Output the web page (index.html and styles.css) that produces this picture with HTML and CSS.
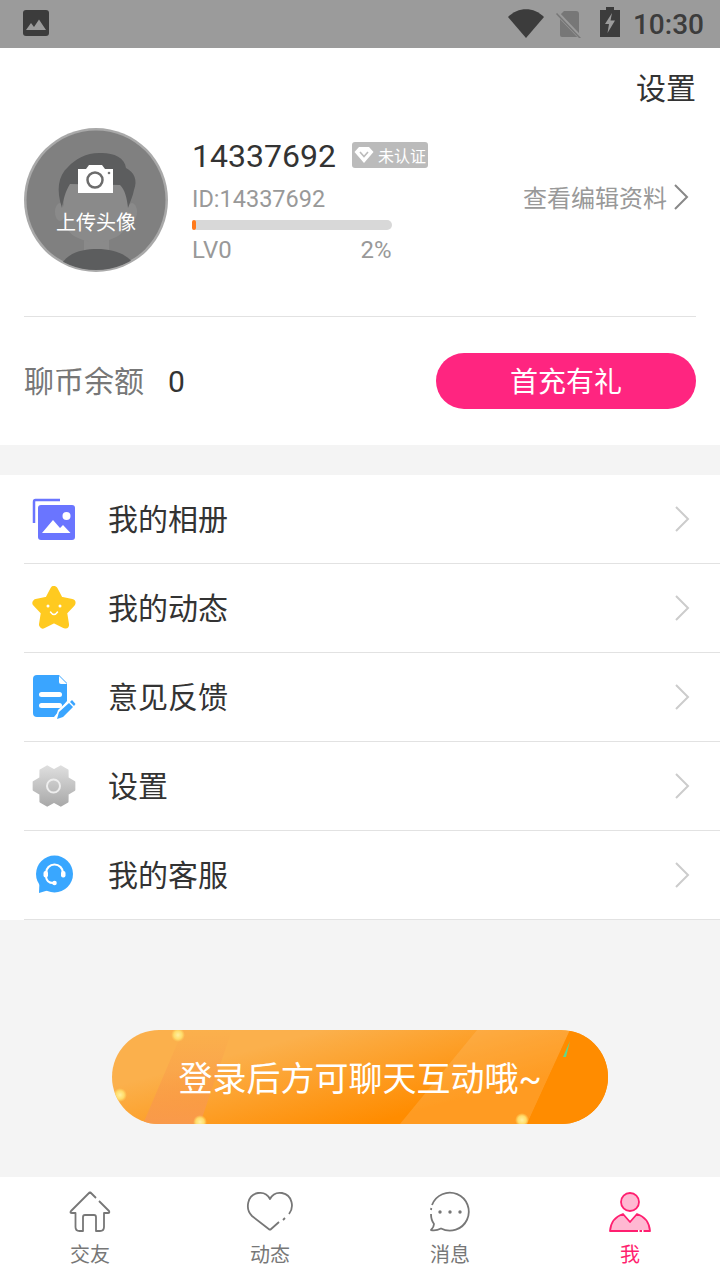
FILE: index.html
```html
<!DOCTYPE html>
<html lang="zh-CN">
<head>
  <meta charset="UTF-8">
  <meta name="viewport" content="width=device-width, initial-scale=1.0">
  <title>我的</title>
  <link rel="stylesheet" href="styles.css">
</head>
<body>
  <div class="page">
    <div class="status-bar">
      <svg class="status-image" width="26" height="26" viewBox="0 0 26 26">
        <rect width="26" height="26" rx="3" fill="#3c3c3c"/>
        <path d="M3 20 L8 13 L11 17 L16 9.500 L23 20 Z" fill="#9b9b9b"/>
      </svg>
      <div class="status-right">
        <svg width="36" height="30" viewBox="0 0 36 30"><path d="M0 8 C10 -2.500 26 -2.500 36 8 L18 29 Z" fill="#3c3c3c"/></svg>
        <svg class="status-sim" width="28" height="28" viewBox="0 0 28 28">
          <path d="M10 1 H22 Q25 1 25 4 V25 Q25 27 23 27 H8 Q6 27 6 25 V5 Z" fill="#777"/>
          <path d="M3 3 L27 28" stroke="#9b9b9b" stroke-width="4"/>
          <path d="M2.500 3.500 L26.500 28.500" stroke="#777" stroke-width="1.500"/>
        </svg>
        <svg class="status-battery" width="20" height="30" viewBox="0 0 20 30">
          <path d="M6 0 H14 V3 H20 V30 H0 V3 H6 Z" fill="#3c3c3c"/>
          <path d="M12 6 L5 17 H9 L7.500 26 L15 13.500 H10.500 Z" fill="#9b9b9b"/>
        </svg>
        <span class="status-time">10:30</span>
      </div>
    </div>

    <div class="profile">
      <div class="settings-link">设置</div>
      <div class="user-row">
        <div class="avatar">
          <svg width="144" height="144" viewBox="0 0 144 144">
            <defs><clipPath id="avatarClip"><circle cx="72" cy="72" r="70"/></clipPath></defs>
            <circle cx="72" cy="72" r="72" fill="#a9a9a9"/>
            <circle cx="72" cy="72" r="69.500" fill="#808080"/>
            <g clip-path="url(#avatarClip)">
              <ellipse cx="36" cy="84" rx="5" ry="9" fill="#8a8a8a"/>
              <ellipse cx="108" cy="84" rx="5" ry="9" fill="#8a8a8a"/>
              <rect x="60" y="100" width="25" height="30" fill="#8a8a8a"/>
              <path d="M40 56 H104 V88 Q104 112 72 114 Q40 112 40 88 Z" fill="#8a8a8a"/>
              <path d="M38 80 C32 62 34 48 44 39 C52 30 64 24 78 25 C90 25 101 30 102 40 C110 44 114 52 110 62 C109 68 106 74 104 80 C103 70 101 62 96 57 L46 56 C42 62 39 72 38 80 Z" fill="#5c5d5e"/>
              <path d="M37 137 C44 124 60 121 73 121 C88 121 101 125 108 134 V146 H37 Z" fill="#5c5d5e"/>
            </g>
            <path d="M54 41 H62 L65 37 H78 L81 41 H89 V65 H54 Z" fill="#fff"/>
            <circle cx="71" cy="52" r="7.500" fill="#fff" stroke="#6c6c6c" stroke-width="2.500"/>
            <circle cx="85" cy="45" r="1.300" fill="#777"/>
          </svg>
          <span class="avatar-text">上传头像</span>
        </div>
        <div class="user-info">
          <div class="name-row">
            <span class="user-name">14337692</span>
            <span class="badge">
              <svg width="20" height="18" viewBox="0 0 20 18">
                <path d="M5 1 H15 L19.500 6 L10 17 L0.500 6 Z" fill="#fff"/>
                <path d="M6 6 L10 10.500 L14 6" fill="none" stroke="#bbb" stroke-width="1.600"/>
              </svg>
              未认证
            </span>
          </div>
          <div class="id-row">
            <span class="user-id">ID:14337692</span>
            <span class="edit-link">查看编辑资料
              <svg width="16" height="28" viewBox="0 0 16 28"><path d="M2 2 L14 14 L2 26" fill="none" stroke="#888" stroke-width="2"/></svg>
            </span>
          </div>
          <div class="level-bar"><div class="level-fill" style="width: 2%"></div></div>
          <div class="level-row"><span>LV0</span><span>2%</span></div>
        </div>
      </div>
      <div class="balance-row">
        <span class="balance-label">聊币余额</span>
        <span class="balance-value">0</span>
        <button class="recharge-btn">首充有礼</button>
      </div>
    </div>

    <div class="menu">
      <div class="menu-row">
        <svg class="menu-icon" width="44" height="44" viewBox="0 0 44 44">
          <path d="M28 3 H3.500 Q2 3 2 5 V26" fill="none" stroke="#6a75ff" stroke-width="2.500"/>
          <rect x="6" y="8" width="37" height="35" rx="3" fill="#6a75ff"/>
          <circle cx="34.500" cy="19" r="4" fill="#fff"/>
          <path d="M10 36 L21 23 L28 31 L31 28 L38.500 36 Z" fill="#fff"/>
        </svg>
        <span class="menu-label">我的相册</span>
        <svg class="menu-arrow" width="16" height="28" viewBox="0 0 16 28"><path d="M2 2 L14 14 L2 26" fill="none" stroke="#ccc" stroke-width="2"/></svg>
      </div>
      <div class="menu-row">
        <svg class="menu-icon" width="44" height="44" viewBox="0 0 44 44">
          <path d="M22 4 L27.500 14.500 L39.500 17 L31 26 L33 38.500 L22 33 L11 38.500 L13 26 L4.500 17 L16.500 14.500 Z" fill="#ffca20" stroke="#ffca20" stroke-width="8" stroke-linejoin="round"/>
          <circle cx="16" cy="20" r="1.500" fill="#fff"/>
          <circle cx="28" cy="20" r="1.500" fill="#fff"/>
          <path d="M18.500 26 Q22 31 25.500 26" fill="none" stroke="#fff" stroke-width="1.500" stroke-linecap="round"/>
        </svg>
        <span class="menu-label">我的动态</span>
        <svg class="menu-arrow" width="16" height="28" viewBox="0 0 16 28"><path d="M2 2 L14 14 L2 26" fill="none" stroke="#ccc" stroke-width="2"/></svg>
      </div>
      <div class="menu-row">
        <svg class="menu-icon" width="44" height="44" viewBox="0 0 44 44">
          <path d="M5 0 H27 L35 8 V26 L22 42 H5 Q1 42 1 38 V4 Q1 0 5 0 Z" fill="#3aa5ff"/>
          <path d="M27 1 L35 9 H29 Q27 9 27 7 Z" fill="#fff"/>
          <rect x="7" y="17" width="23" height="5" rx="2.500" fill="#fff"/>
          <rect x="7" y="28" width="23" height="5" rx="2.500" fill="#fff"/>
          <path d="M24 42 L26 35 L38 24 L44 29 L31 41 Z" fill="#fff"/>
          <path d="M25 44 L27 37 L37 28 L41 32 L31 42 Z M38 27 L40 25 L43.500 29 L42 31 Z" fill="#3aa5ff"/>
        </svg>
        <span class="menu-label">意见反馈</span>
        <svg class="menu-arrow" width="16" height="28" viewBox="0 0 16 28"><path d="M2 2 L14 14 L2 26" fill="none" stroke="#ccc" stroke-width="2"/></svg>
      </div>
      <div class="menu-row">
        <svg class="menu-icon" width="44" height="44" viewBox="0 0 44 44">
          <defs><linearGradient id="gearFill" x1="0" y1="0" x2="0" y2="1"><stop offset="0" stop-color="#dedede"/><stop offset="1" stop-color="#a9a9a9"/></linearGradient></defs>
          <path d="M42.600 18 L42.600 26 L35.900 30 L35.800 37.800 L28.800 41.900 L22 38 L15.200 41.900 L8.200 37.800 L8.100 30 L1.400 26 L1.400 18 L8.100 14 L8.200 6.200 L15.200 2.100 L22 6 L28.800 2.100 L35.800 6.200 L35.900 14 Z" fill="url(#gearFill)" stroke="url(#gearFill)" stroke-width="1.500" stroke-linejoin="round"/>
          <circle cx="21.500" cy="22" r="6.500" fill="none" stroke="#eee" stroke-width="2"/>
        </svg>
        <span class="menu-label">设置</span>
        <svg class="menu-arrow" width="16" height="28" viewBox="0 0 16 28"><path d="M2 2 L14 14 L2 26" fill="none" stroke="#ccc" stroke-width="2"/></svg>
      </div>
      <div class="menu-row">
        <svg class="menu-icon" width="44" height="44" viewBox="0 0 44 44">
          <circle cx="22.500" cy="21" r="18.500" fill="#39a7ff"/>
          <path d="M7 40 L7.500 28 L17 37 Z" fill="#39a7ff"/>
          <path d="M14 20 A8.500 8.500 0 0 1 31 20" fill="none" stroke="#fff" stroke-width="2.200"/>
          <rect x="11.500" y="18" width="4.500" height="6.500" rx="2" fill="#fff"/>
          <rect x="29" y="18" width="4.500" height="6.500" rx="2" fill="#fff"/>
          <path d="M14 24 Q15 30 21 30" fill="none" stroke="#fff" stroke-width="2"/>
          <circle cx="22.500" cy="30" r="2.300" fill="#fff"/>
        </svg>
        <span class="menu-label">我的客服</span>
        <svg class="menu-arrow" width="16" height="28" viewBox="0 0 16 28"><path d="M2 2 L14 14 L2 26" fill="none" stroke="#ccc" stroke-width="2"/></svg>
      </div>
    </div>

    <div class="banner-area">
      <div class="banner">
        <svg class="banner-art" width="496" height="94" viewBox="0 0 496 94">
          <defs>
            <linearGradient id="patchFill" x1="0" y1="0" x2="0" y2="1">
              <stop offset="0" stop-color="#f99a4b" stop-opacity="0"/>
              <stop offset="1" stop-color="#f99a4b"/>
            </linearGradient>
            <radialGradient id="coinFill">
              <stop offset="0" stop-color="#fff0a0"/>
              <stop offset="0.6" stop-color="#ffdc6a"/>
              <stop offset="1" stop-color="#ffd060" stop-opacity="0"/>
            </radialGradient>
          </defs>
          <path d="M71 0 H120 L88 94 H31 Z" fill="url(#patchFill)"/>
          <path d="M365 0 L288 94 H415 L458 0 Z" fill="#ffc070" opacity="0.3"/>
          <path d="M458 0 L415 94 H496 V0 Z" fill="#ff8c00"/>
          <circle cx="66" cy="5" r="7" fill="url(#coinFill)"/>
          <circle cx="8" cy="65" r="7" fill="url(#coinFill)"/>
          <circle cx="88" cy="92" r="7" fill="url(#coinFill)"/>
          <circle cx="410" cy="90" r="7" fill="url(#coinFill)"/>
          <path d="M451 27 L458 11 L454 27 Z" fill="#5fd98a"/>
        </svg>
        <span class="banner-text">登录后方可聊天互动哦~</span>
      </div>
    </div>

    <div class="tab-bar">
      <div class="tab">
        <svg width="44" height="44" viewBox="0 0 44 44">
          <path d="M22 2 L3 21 Q1.500 23 4 23 H7.500 V37 Q7.500 41 11.500 41 H15 V27 Q15 25 17 25 H26 Q28 25 28 27 V41 H32 Q36 41 36 37 V23 H40 Q42 23 41 21 L31 11 M28 8 L22 2" fill="none" stroke="#777" stroke-width="1.800" stroke-linejoin="round"/>
        </svg>
        <span>交友</span>
      </div>
      <div class="tab">
        <svg width="48" height="44" viewBox="0 0 48 44">
          <path d="M24 40 L6 26 C-1 19 1 5 12 3 C18 2 22 5 24 9 C26 5 30 2 36 3 C47 5 48 18 43 24 M39 28 L37 30 M33 32 L24 40" fill="none" stroke="#777" stroke-width="1.800" stroke-linejoin="round"/>
        </svg>
        <span>动态</span>
      </div>
      <div class="tab">
        <svg width="44" height="44" viewBox="0 0 44 44">
          <path d="M4 15 A19 19 0 1 1 13 38.500 Q8 41 3 40 Q6 37 6 34 Q3 30 3 24 M3 20 L3.300 18" fill="none" stroke="#777" stroke-width="1.800" stroke-linejoin="round"/>
          <circle cx="12" cy="22" r="1.700" fill="#777"/>
          <circle cx="22" cy="22" r="1.700" fill="#777"/>
          <circle cx="32" cy="22" r="1.700" fill="#777"/>
        </svg>
        <span>消息</span>
      </div>
      <div class="tab tab-active">
        <svg width="44" height="44" viewBox="0 0 44 44">
          <circle cx="22" cy="12" r="9" fill="#ffb8d2" stroke="#ff1f70" stroke-width="1.800"/>
          <path d="M2 41 Q3 28 15 24 L22 32 L29 24 Q41 28 42 41 Z" fill="#ffb8d2" stroke="#ff1f70" stroke-width="1.800" stroke-linejoin="round"/>
          <path d="M30 41 H31.500 M34 41 H35.500" stroke="#fff" stroke-width="2"/>
        </svg>
        <span>我</span>
      </div>
    </div>
  </div>
</body>
</html>
```

FILE: styles.css
```css
* {
  box-sizing: border-box;
}

body {
  margin: 0;
  background-color: #f4f4f4;
  font-family: Roboto, 'Noto Sans CJK SC', sans-serif;
}

.page {
  display: flex;
  flex-direction: column;
  width: 720px;
  height: 1280px;
  overflow: hidden;
}

/* status bar */
.status-bar {
  display: flex;
  align-items: center;
  justify-content: space-between;
  height: 48px;
  padding: 0 16px 0 23px;
  background-color: #9b9b9b;
}

.status-image {
  margin-top: -2px;
}

.status-right {
  display: flex;
  align-items: center;
}

.status-sim {
  margin-left: 10px;
}

.status-battery {
  margin-left: 18px;
  margin-top: -4px;
}

.status-time {
  margin-left: 13px;
  color: #3c3c3c;
  font-size: 28px;
  font-weight: 500;
}

/* profile */
.profile {
  height: 397px;
  padding: 0 24px;
  background-color: #ffffff;
}

.settings-link {
  padding-top: 19px;
  text-align: right;
  color: #333333;
  font-size: 30px;
  line-height: 44px;
}

.user-row {
  display: flex;
  height: 189px;
  margin-top: 17px;
  border-bottom: 1px solid #e2e2e2;
}

.avatar {
  position: relative;
  width: 144px;
  height: 144px;
}

.avatar svg {
  display: block;
}

.avatar-text {
  position: absolute;
  left: 0;
  right: 0;
  top: 80px;
  text-align: center;
  color: #ffffff;
  font-size: 20px;
  line-height: 30px;
}

.user-info {
  flex: 1;
  margin-left: 24px;
}

.name-row {
  display: flex;
  align-items: center;
  height: 30px;
  margin-top: 13px;
}

.user-name {
  color: #333333;
  font-size: 32px;
}

.badge {
  display: flex;
  align-items: center;
  gap: 4px;
  height: 26px;
  margin-left: 16px;
  margin-top: -2px;
  padding: 0 2px 0 2px;
  background-color: #bbbbbb;
  border-radius: 3px;
  color: #ffffff;
  font-size: 16px;
}

.id-row {
  display: flex;
  align-items: center;
  justify-content: space-between;
  height: 30px;
  margin-top: 13px;
  padding-right: 7px;
  color: #999999;
  font-size: 24px;
}

.user-id {
  font-size: 23.5px;
}

.edit-link {
  display: flex;
  align-items: center;
  gap: 6px;
  margin-top: -5px;
}

.level-bar {
  width: 200px;
  height: 10px;
  margin-top: 6px;
  background-color: #d8d8d8;
  border-radius: 5px;
}

.level-fill {
  height: 100%;
  background-color: #ff7a1c;
  border-radius: 2px;
}

.level-row {
  display: flex;
  justify-content: space-between;
  width: 199.5px;
  margin-top: 4px;
  color: #999999;
  font-size: 24px;
  line-height: 32px;
}

.balance-row {
  display: flex;
  align-items: center;
  height: 56px;
  margin-top: 36px;
  color: #777777;
  font-size: 30px;
}

.balance-label {
  margin-top: -4px;
}

.balance-value {
  margin-left: 24px;
  color: #333333;
}

.recharge-btn {
  width: 260px;
  height: 56px;
  margin-left: auto;
  padding: 0 0 2px;
  background-color: #ff2580;
  border: none;
  border-radius: 28px;
  color: #ffffff;
  font-family: inherit;
  font-size: 28px;
}

/* menu */
.menu {
  margin-top: 30px;
  background-color: #ffffff;
}

.menu-row {
  display: flex;
  align-items: center;
  height: 89px;
  margin-left: 24px;
  border-bottom: 1px solid #e2e2e2;
}

.menu-icon {
  flex: none;
  margin-left: 8px;
}

.menu-label {
  margin-left: 32px;
  margin-top: -4px;
  color: #333333;
  font-size: 30px;
}

.menu-arrow {
  margin-left: auto;
  margin-right: 30px;
}

/* login banner */
.banner-area {
  display: flex;
  flex: 1;
  align-items: flex-start;
  justify-content: center;
  padding-top: 110px;
}

.banner {
  position: relative;
  display: flex;
  align-items: center;
  justify-content: center;
  width: 496px;
  height: 94px;
  overflow: hidden;
  background: linear-gradient(165deg, #fbb04c 25%, #ff8c00 72%);
  border-radius: 47px;
}

.banner-art {
  position: absolute;
  left: 0;
  top: 0;
}

.banner-text {
  position: relative;
  margin-top: -2px;
  color: #ffffff;
  font-size: 34px;
}

/* tab bar */
.tab-bar {
  display: grid;
  grid-template-columns: repeat(4, 1fr);
  height: 103px;
  padding-top: 13px;
  background-color: #ffffff;
}

.tab {
  display: flex;
  flex-direction: column;
  align-items: center;
  color: #777777;
  font-size: 20px;
  line-height: 30px;
}

.tab svg {
  display: block;
  height: 44px;
  margin-bottom: 6px;
}

.tab-active {
  color: #ff1f70;
}
```
